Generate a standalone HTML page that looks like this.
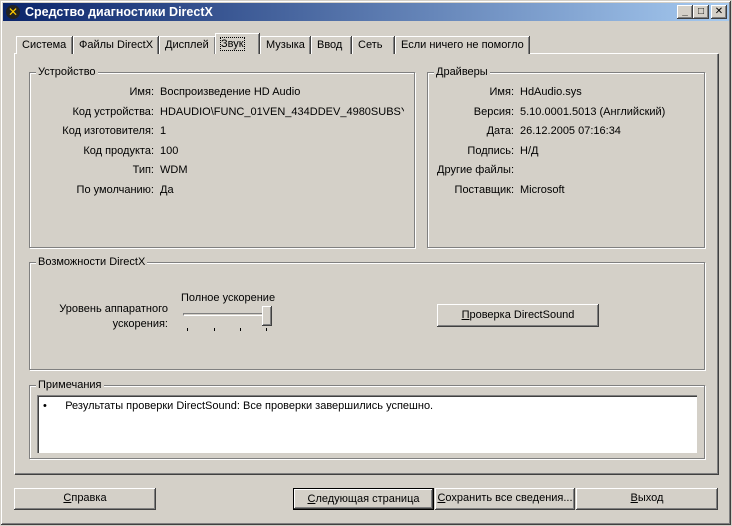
<!DOCTYPE html>
<html><head><meta charset="utf-8"><style>
*{margin:0;padding:0;box-sizing:border-box}
body{width:732px;height:526px;background:#d4d0c8;font-family:Tahoma,"Liberation Sans","DejaVu Sans",sans-serif;font-size:11px;color:#000;position:relative;overflow:hidden}
.abs{position:absolute}
.win{left:0;top:0;width:732px;height:526px;border:1px solid #d4d0c8;box-shadow:inset -1px -1px #404040,inset 1px 1px #fff,inset -2px -2px #808080}
.title{left:3px;top:3px;width:726px;height:18px;background:linear-gradient(90deg,#0a246a,#a6caf0);color:#fff;font-weight:bold;font-size:12.5px;line-height:18px;padding-left:22px}
.tb{top:5px;width:16px;height:14px;background:#d4d0c8;box-shadow:inset -1px -1px #404040,inset 1px 1px #fff,inset -2px -2px #808080;font-size:10px;text-align:center;line-height:13px;font-weight:bold}
.tab{top:36px;height:18px;background:#d4d0c8;border-top:1px solid #fff;border-left:1px solid #fff;box-shadow:inset -1px 0 #808080, 1px 0 #404040;line-height:16px;padding:0 5px;white-space:nowrap}
.panel{left:14px;top:53px;width:704px;height:421px;border-top:1px solid #fff;border-left:1px solid #fff;box-shadow:inset -1px -1px #808080,1px 1px #404040}
.grp{border:1px solid #808080;box-shadow:inset 1px 1px #fff,1px 1px #fff}
.lg{background:#d4d0c8;padding:0 2px;position:absolute;top:-7px;left:6px}
.lbl{text-align:right;width:130px}
.btn{top:488px;height:22px;background:#d4d0c8;box-shadow:inset -1px -1px #404040,inset 1px 1px #fff,inset -2px -2px #808080;text-align:center;line-height:21px}
</style></head><body>
<div class="abs win"></div>
<div class="abs title">Средство диагностики DirectX</div>
<div class="abs" style="left:6px;top:5px;width:14px;height:14px;border-radius:7px;background:#222;color:#fc0;font-weight:bold;font-size:12px;text-align:center;line-height:14px">✕</div>
<div class="abs tb" style="left:677px">_</div>
<div class="abs tb" style="left:693px">□</div>
<div class="abs tb" style="left:711px">✕</div>

<div class="abs panel"></div>
<div class="abs tab" style="left:16px;width:56px">Система</div>
<div class="abs tab" style="left:73px;width:85px">Файлы DirectX</div>
<div class="abs tab" style="left:159px;width:56px">Дисплей</div>
<div class="abs tab" style="left:215px;top:33px;height:21px;width:44px;padding-top:2px"><span style="outline:1px dotted #000">Звук</span></div>
<div class="abs tab" style="left:260px;width:50px">Музыка</div>
<div class="abs tab" style="left:311px;width:40px">Ввод</div>
<div class="abs tab" style="left:352px;width:42px">Сеть</div>
<div class="abs tab" style="left:395px;width:134px">Если ничего не помогло</div>

<div class="abs grp" style="left:29px;top:72px;width:386px;height:176px"><span class="lg">Устройство</span></div>
<div class="abs grp" style="left:427px;top:72px;width:278px;height:176px"><span class="lg">Драйверы</span></div>
<div class="abs grp" style="left:29px;top:262px;width:676px;height:108px"><span class="lg">Возможности DirectX</span></div>
<div class="abs grp" style="left:29px;top:385px;width:676px;height:74px"><span class="lg">Примечания</span></div>

<div class="abs" style="left:24px;top:83px;line-height:19.5px">
<div class="lbl">Имя:</div><div class="lbl">Код устройства:</div><div class="lbl">Код изготовителя:</div><div class="lbl">Код продукта:</div><div class="lbl">Тип:</div><div class="lbl">По умолчанию:</div></div>
<div class="abs" style="left:160px;top:83px;line-height:19.5px;width:244px;overflow:hidden;white-space:nowrap">
<div>Воспроизведение HD Audio</div><div>HDAUDIO\FUNC_01VEN_434DDEV_4980SUBSYS_8</div><div>1</div><div>100</div><div>WDM</div><div>Да</div></div>

<div class="abs" style="left:384px;top:83px;line-height:19.5px">
<div class="lbl">Имя:</div><div class="lbl">Версия:</div><div class="lbl">Дата:</div><div class="lbl">Подпись:</div><div class="lbl">Другие файлы:</div><div class="lbl">Поставщик:</div></div>
<div class="abs" style="left:520px;top:83px;line-height:19.5px;white-space:nowrap">
<div>HdAudio.sys</div><div>5.10.0001.5013 (Английский)</div><div>26.12.2005 07:16:34</div><div>Н/Д</div><div>&nbsp;</div><div>Microsoft</div></div>

<div class="abs" style="left:40px;top:302px;width:128px;text-align:right;line-height:15px">Уровень аппаратного<br>ускорения:</div>
<div class="abs" style="left:181px;top:292px">Полное ускорение</div>
<div class="abs" style="left:183px;top:313px;width:88px;height:3px;border-top:1px solid #808080;border-left:1px solid #808080;border-bottom:1px solid #fff;border-right:1px solid #fff"></div>
<div class="abs" style="left:262px;top:306px;width:10px;height:20px;background:#d4d0c8;box-shadow:inset -1px -1px #404040,inset 1px 1px #fff,inset -2px -2px #808080"></div>
<div class="abs" style="left:187px;top:328px;width:1px;height:3px;background:#000"></div>
<div class="abs" style="left:214px;top:328px;width:1px;height:3px;background:#000"></div>
<div class="abs" style="left:240px;top:328px;width:1px;height:3px;background:#000"></div>
<div class="abs" style="left:266px;top:328px;width:1px;height:3px;background:#000"></div>

<div class="abs btn" style="left:437px;top:304px;width:162px;height:23px;line-height:22px"><u>П</u>роверка DirectSound</div>

<div class="abs" style="left:37px;top:395px;width:660px;height:58px;background:#fff;border-top:1px solid #808080;border-left:1px solid #808080;box-shadow:inset 1px 1px #404040;padding:4px 0 0 5px">•&nbsp;&nbsp;&nbsp;&nbsp;&nbsp;&nbsp;Результаты проверки DirectSound: Все проверки завершились успешно.</div>

<div class="abs btn" style="left:14px;width:142px"><u>С</u>правка</div>
<div class="abs btn" style="left:293px;width:141px;border:1px solid #000"><u>С</u>ледующая страница</div>
<div class="abs btn" style="left:435px;width:140px"><u>С</u>охранить все сведения...</div>
<div class="abs btn" style="left:576px;width:142px"><u>В</u>ыход</div>
</body></html>
